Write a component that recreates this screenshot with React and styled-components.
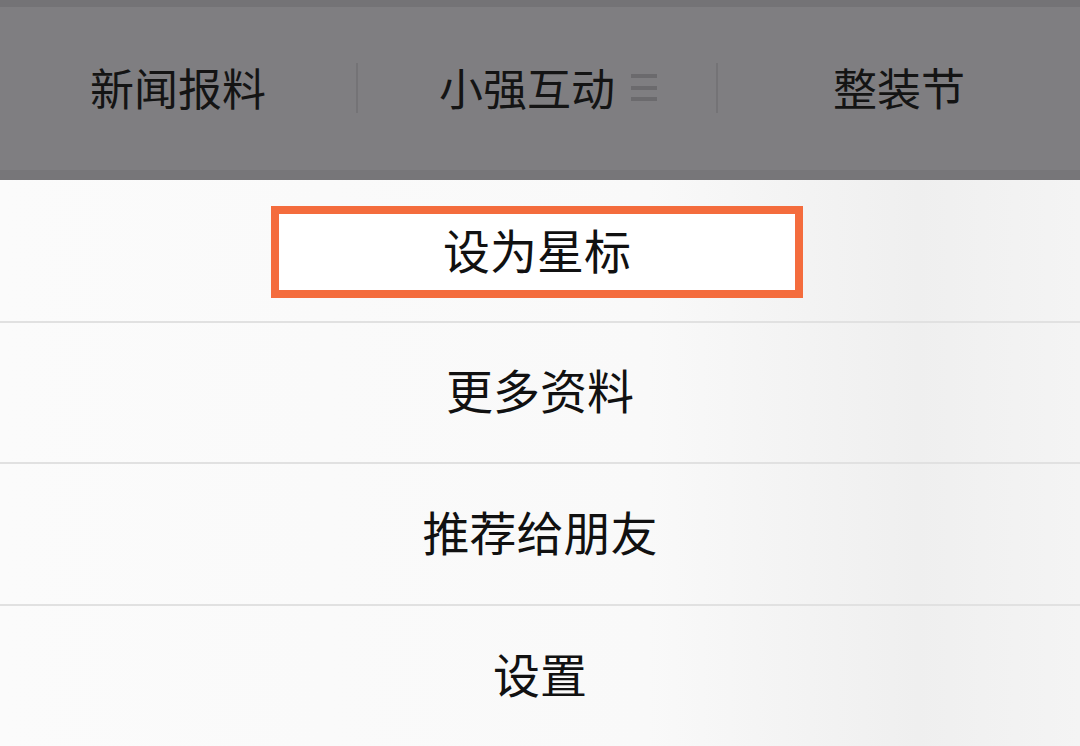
import React from 'react';
import styled, { createGlobalStyle } from 'styled-components';

const GlobalStyle = createGlobalStyle`
  html, body {
    margin: 0;
    padding: 0;
    width: 1080px;
    height: 746px;
    overflow: hidden;
    background: #ffffff;
  }
  body {
    font-family: "Noto Sans CJK SC", "Noto Sans", sans-serif;
  }
`;

const Screen = styled.div`
  width: 1080px;
  height: 746px;
  display: flex;
  flex-direction: column;
  overflow: hidden;
`;

const TabBar = styled.div`
  height: 180px;
  flex-shrink: 0;
  display: grid;
  grid-template-columns: 356px 360px 1fr;
  align-items: center;
  background: #7f7e81;
  border-top: 7px solid #747376;
  border-bottom: 10px solid #777679;
  box-sizing: border-box;
`;

const Tab = styled.div`
  height: 50px;
  display: flex;
  align-items: center;
  justify-content: center;
  gap: 16px;
  font-size: 44px;
  color: #141414;
  border-left: ${p => (p.$divider ? '2px solid #747376' : 'none')};
  padding-left: ${p => p.$shift || 0}px;
  margin-top: -2px;
`;

const Label = styled.span`
  line-height: 1;
  position: relative;
  top: -1px;
`;

const MenuIcon = styled.span`
  width: 26px;
  height: 27px;
  display: flex;
  flex-direction: column;
  justify-content: space-between;

  i {
    display: block;
    height: 4px;
    background: #6b6a6d;
  }
`;

const Menu = styled.div`
  flex: 1;
  display: flex;
  flex-direction: column;
  background: linear-gradient(90deg, #fbfbfb 0%, #f9f9f9 60%, #efefef 85%, #f4f4f4 100%);
`;

const Row = styled.div`
  height: ${p => p.$h || 141}px;
  flex-shrink: 0;
  display: flex;
  align-items: center;
  justify-content: center;
  border-bottom: ${p => (p.$last ? 'none' : '2px solid #e1e1e1')};
  box-sizing: border-box;
  font-size: 47px;
  color: #111111;
`;

const Text = styled.span`
  line-height: 1;
  position: relative;
  top: -4px;
`;

const Highlight = styled.div`
  width: 532px;
  height: 92px;
  box-sizing: border-box;
  border: 8px solid #f46c3d;
  background: #ffffff;
  display: flex;
  align-items: center;
  justify-content: center;
  margin: 3px 6px 0 0;
`;

export default function App() {
  return (
    <>
      <GlobalStyle />
      <Screen>
        <TabBar>
          <Tab>
            <Label>新闻报料</Label>
          </Tab>
          <Tab $divider $shift={22}>
            <Label>小强互动</Label>
            <MenuIcon>
              <i />
              <i />
              <i />
            </MenuIcon>
          </Tab>
          <Tab $divider>
            <Label>整装节</Label>
          </Tab>
        </TabBar>
        <Menu>
          <Row $h={143}>
            <Highlight>
              <Text>设为星标</Text>
            </Highlight>
          </Row>
          <Row>
            <Text>更多资料</Text>
          </Row>
          <Row $h={142}>
            <Text>推荐给朋友</Text>
          </Row>
          <Row $last>
            <Text>设置</Text>
          </Row>
        </Menu>
      </Screen>
    </>
  );
}
